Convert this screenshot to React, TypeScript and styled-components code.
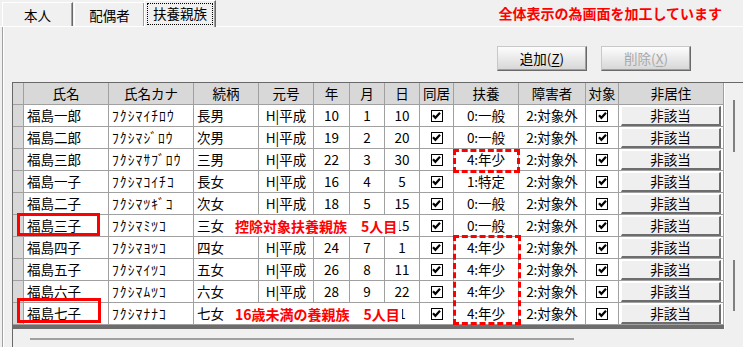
import React from 'react';
import styled, { createGlobalStyle } from 'styled-components';

const GlobalStyle = createGlobalStyle`
  html, body {
    margin: 0;
    padding: 0;
    background: #f0f0f0;
  }
  body {
    font-family: "Noto Sans CJK JP", "Noto Sans", sans-serif;
    font-size: 13.5px;
    color: #000;
  }
`;

const Window = styled.div`
  width: 743px;
  height: 347px;
  overflow: hidden;
  background: #f0f0f0;
`;

const TopBar = styled.div`
  display: flex;
  align-items: flex-end;
  height: 26px;
  padding-left: 2px;
  border-bottom: 1px solid #fff;
`;

const Tab = styled.div<{ $active?: boolean }>`
  box-sizing: border-box;
  display: flex;
  width: ${({ $active }) => ($active ? '72px' : '71px')};
  height: ${({ $active }) => ($active ? '27px' : '24px')};
  margin: ${({ $active }) => ($active ? '0 0 -1px -2px' : '0 1px 0 0')};
  padding: ${({ $active }) => ($active ? '2px 2px 2px 2px' : '2px 0 0 0')};
  background: #f0f0f0;
  border-top: 1px solid #fff;
  border-left: 1px solid #fff;
  border-right: 1px solid #696969;
  box-shadow: inset -1px 0 #a0a0a0;
  align-items: center;
  justify-content: center;
  font-size: 13.5px;
  line-height: 1;
`;

const FocusRing = styled.div`
  flex: 1;
  align-self: stretch;
  display: flex;
  align-items: center;
  justify-content: center;
  outline: 1px dotted #000;
  outline-offset: -1px;
`;

const Notice = styled.div`
  align-self: center;
  margin-left: auto;
  margin-right: 21px;
  color: #ff0000;
  font-weight: 700;
  font-size: 14px;
  line-height: 1;
`;

const Panel = styled.div`
  margin-left: 2px;
  height: 320px;
  padding-top: 19px;
  border-left: 1px solid #a0a0a0;
  box-shadow: inset 1px 0 #fff;
`;

const Toolbar = styled.div`
  display: flex;
  justify-content: flex-end;
  gap: 14px;
  padding-right: 52px;
`;

const ToolButton = styled.div<{ $disabled?: boolean }>`
  box-sizing: border-box;
  width: 90px;
  height: 25px;
  display: flex;
  align-items: center;
  justify-content: center;
  background: linear-gradient(#fdfdfd, #d6d6d6);
  border: 1px solid #c8c8c8;
  border-right-color: #696969;
  border-bottom-color: #696969;
  box-shadow: inset -1px -1px #a0a0a0;
  color: ${({ $disabled }) => ($disabled ? '#a8a8a8' : '#000')};
  font-size: 13.5px;
  line-height: 1;

  & u {
    text-decoration-thickness: 1px;
    text-underline-offset: 2px;
  }
`;

const TableFrame = styled.div`
  position: relative;
  margin: 11px 0 0 9px;
  border-left: 1px solid #696969;
  border-top: 1px solid #696969;
  background: #f0f0f0;
`;

const BodyRow = styled.div`
  display: flex;
`;

const Grid = styled.div`
  display: grid;
  grid-template-columns: 11px 85px 85px 65px 55px 36px 35px 35px 34px 65px 67px 33px 105px;
  grid-auto-rows: 22px;
  border-bottom: 4px solid #6d6d6d;
`;

type Align = 'left' | 'center';

const Cell = styled.div<{ $head?: boolean; $align?: Align; $kana?: boolean }>`
  box-sizing: border-box;
  display: flex;
  align-items: center;
  justify-content: ${({ $align }) => ($align === 'left' ? 'flex-start' : 'center')};
  padding-left: ${({ $align }) => ($align === 'left' ? '3px' : '0')};
  border-right: 1px solid #a0a0a0;
  border-bottom: 1px solid #a0a0a0;
  background: ${({ $head }) => ($head ? '#d8d8d8' : '#fff')};
  font-size: 13.5px;
  letter-spacing: ${({ $kana }) => ($kana ? '1.1px' : '0')};
  line-height: 1;
  white-space: nowrap;
  overflow: hidden;
`;

const Check = styled.span`
  box-sizing: border-box;
  width: 12px;
  height: 12px;
  display: flex;
  align-items: center;
  justify-content: center;
  border: 1px solid #000;
  background: #fff;
`;

const RowButton = styled.div`
  box-sizing: border-box;
  flex: 1;
  align-self: stretch;
  margin: 1px 2px 0 2px;
  display: flex;
  align-items: center;
  justify-content: center;
  background: #efefef;
  border-top: 1px solid #fff;
  border-left: 1px solid #fff;
  border-right: 2px solid #6d6d6d;
  border-bottom: 2px solid #6d6d6d;
  font-size: 13.5px;
  line-height: 1;
`;

const VScroll = styled.div`
  box-sizing: border-box;
  width: 19px;
  display: flex;
  flex-direction: column;
  padding-left: 8px;
  border-left: 1px solid #fff;
`;

const ScrollMark = styled.div<{ $top: number; $len: number }>`
  width: 2px;
  height: ${({ $len }) => $len}px;
  margin-top: ${({ $top }) => $top}px;
  background: #808080;
`;

const HScroll = styled.div`
  height: 19px;
  padding: 9px 0 0 17px;
  box-sizing: border-box;
`;

const HScrollLine = styled.div`
  width: 544px;
  height: 2px;
  background: #a0a0a0;
`;

const Mark = styled.div<{ $x: number; $y: number; $w: number; $h: number; $dashed?: boolean }>`
  position: absolute;
  box-sizing: border-box;
  left: ${({ $x }) => $x}px;
  top: ${({ $y }) => $y}px;
  width: ${({ $w }) => $w}px;
  height: ${({ $h }) => $h}px;
  border: 3px ${({ $dashed }) => ($dashed ? 'dashed' : 'solid')} #ff0000;
  pointer-events: none;
`;

const Note = styled.div<{ $x: number; $y: number; $w: number }>`
  position: absolute;
  box-sizing: border-box;
  left: ${({ $x }) => $x}px;
  top: ${({ $y }) => $y}px;
  width: ${({ $w }) => $w}px;
  height: 21px;
  padding-left: 5px;
  display: flex;
  align-items: center;
  background: #fff;
  color: #ff0000;
  font-weight: 700;
  font-size: 14px;
  line-height: 1;
  white-space: pre;
`;

const CheckBox = () => (
  <Check>
    <svg width="9" height="9" viewBox="0 0 9 9">
      <polyline points="1,4.2 3.4,6.8 8,1.8" fill="none" stroke="#000" strokeWidth="2.2" />
    </svg>
  </Check>
);

const heads = ['', '氏名', '氏名カナ', '続柄', '元号', '年', '月', '日', '同居', '扶養', '障害者', '対象', '非居住'];

// rows 6 and 10 have their era/year/month hidden under the red notes
const rows = [
  ['福島一郎', 'ﾌｸｼﾏｲﾁﾛｳ', '長男', 'H|平成', '10', '1', '10', '0:一般'],
  ['福島二郎', 'ﾌｸｼﾏｼﾞﾛｳ', '次男', 'H|平成', '19', '2', '20', '0:一般'],
  ['福島三郎', 'ﾌｸｼﾏｻﾌﾞﾛｳ', '三男', 'H|平成', '22', '3', '30', '4:年少'],
  ['福島一子', 'ﾌｸｼﾏｺｲﾁｺ', '長女', 'H|平成', '16', '4', '5', '1:特定'],
  ['福島二子', 'ﾌｸｼﾏﾂｷﾞｺ', '次女', 'H|平成', '18', '5', '15', '0:一般'],
  ['福島三子', 'ﾌｸｼﾏﾐﾂｺ', '三女', '', '', '', '15', '0:一般'],
  ['福島四子', 'ﾌｸｼﾏﾖﾂｺ', '四女', 'H|平成', '24', '7', '1', '4:年少'],
  ['福島五子', 'ﾌｸｼﾏｲﾂｺ', '五女', 'H|平成', '26', '8', '11', '4:年少'],
  ['福島六子', 'ﾌｸｼﾏﾑﾂｺ', '六女', 'H|平成', '28', '9', '22', '4:年少'],
  ['福島七子', 'ﾌｸｼﾏﾅﾅｺ', '七女', '', '', '', '1', '4:年少'],
];

export default function App() {
  return (
    <Window>
      <GlobalStyle />
      <TopBar>
        <Tab>本人</Tab>
        <Tab>配偶者</Tab>
        <Tab $active>
          <FocusRing>扶養親族</FocusRing>
        </Tab>
        <Notice>全体表示の為画面を加工しています</Notice>
      </TopBar>
      <Panel>
        <Toolbar>
          <ToolButton>
            追加(<u>Z</u>)
          </ToolButton>
          <ToolButton $disabled>
            削除(<u>X</u>)
          </ToolButton>
        </Toolbar>
        <TableFrame>
          <BodyRow>
            <Grid>
              {heads.map((h, i) => (
                <Cell key={`h-${i}`} $head>
                  {h}
                </Cell>
              ))}
              {rows.map(([name, kana, rel, era, yy, mm, dd, fuyo], r) => (
                <React.Fragment key={`r-${r}`}>
                  <Cell $head />
                  <Cell $align="left">{name}</Cell>
                  <Cell $align="left" $kana>
                    {kana}
                  </Cell>
                  <Cell $align="left">{rel}</Cell>
                  <Cell>{era}</Cell>
                  <Cell>{yy}</Cell>
                  <Cell>{mm}</Cell>
                  <Cell>{dd}</Cell>
                  <Cell>
                    <CheckBox />
                  </Cell>
                  <Cell>{fuyo}</Cell>
                  <Cell>2:対象外</Cell>
                  <Cell>
                    <CheckBox />
                  </Cell>
                  <Cell>
                    <RowButton>非該当</RowButton>
                  </Cell>
                </React.Fragment>
              ))}
            </Grid>
            <VScroll>
              <ScrollMark $top={17} $len={52} />
              <ScrollMark $top={108} $len={51} />
            </VScroll>
          </BodyRow>
          <HScroll>
            <HScrollLine />
          </HScroll>

          <Note $x={217} $y={132} $w={169}>
            控除対象扶養親族　5人目
          </Note>
          <Note $x={217} $y={220} $w={172}>
            16歳未満の養親族　5人目
          </Note>
          <Mark $x={4} $y={130} $w={83} $h={23} />
          <Mark $x={4} $y={215} $w={84} $h={25} />
          <Mark $x={440} $y={66} $w={67} $h={24} $dashed />
          <Mark $x={440} $y={152} $w={68} $h={90} $dashed />
        </TableFrame>
      </Panel>
    </Window>
  );
}
